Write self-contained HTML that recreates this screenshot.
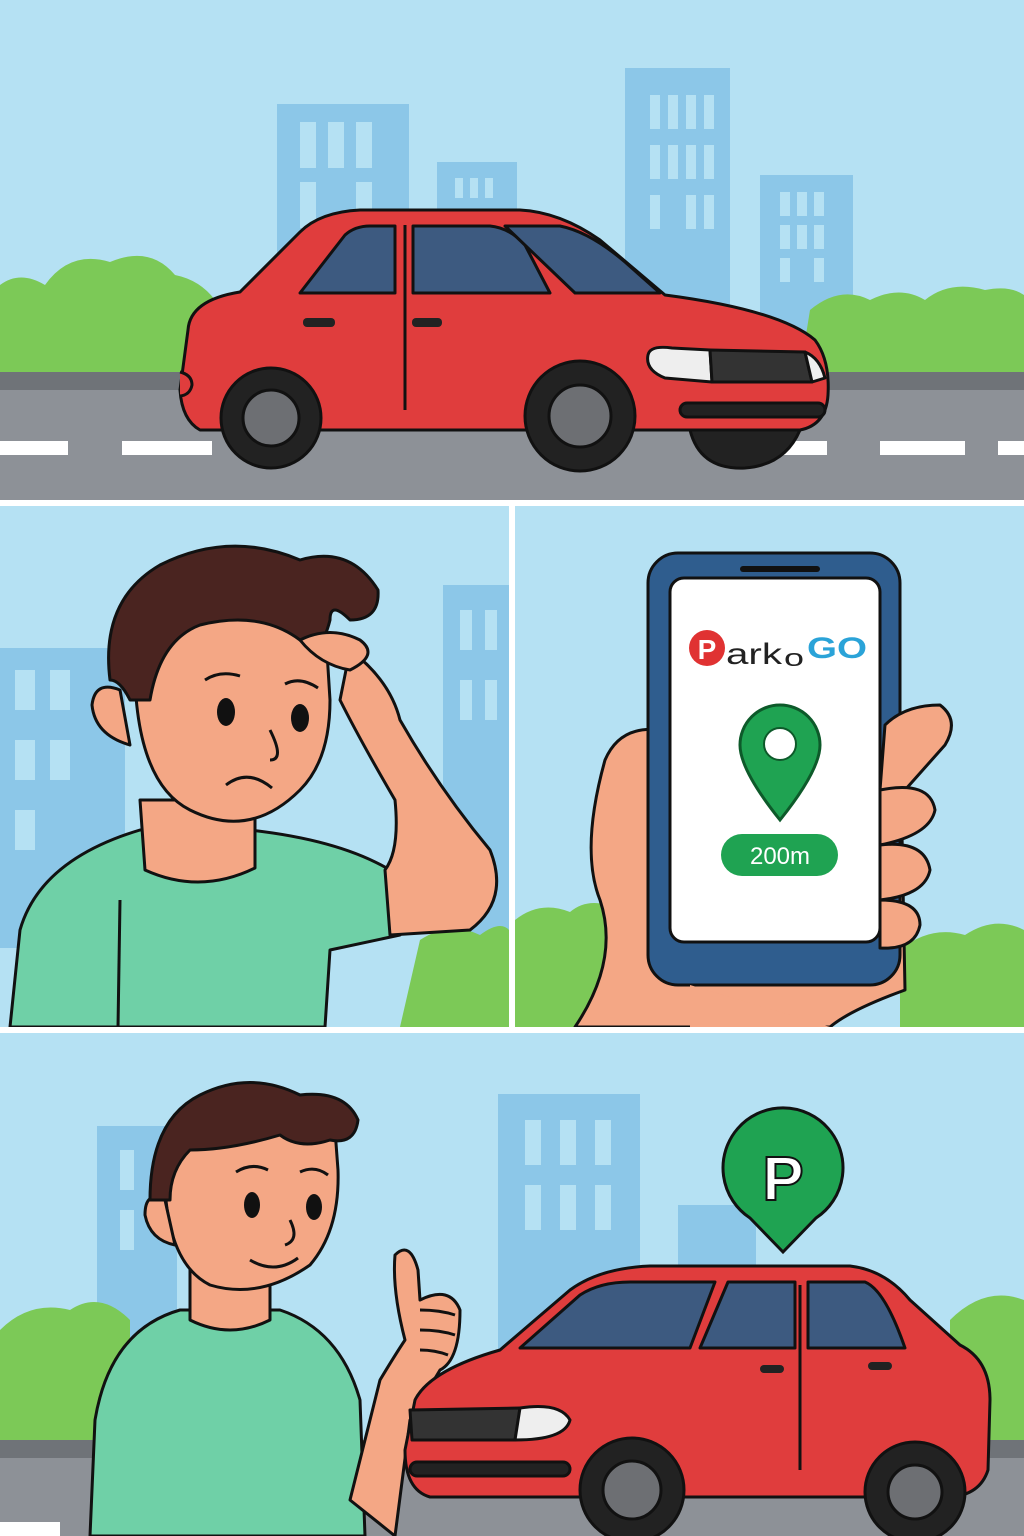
<!DOCTYPE html>
<html><head><meta charset="utf-8"><style>
html,body{margin:0;padding:0;background:#fff;}
svg{display:block}
</style></head><body>
<svg width="1024" height="1536" viewBox="0 0 1024 1536" xmlns="http://www.w3.org/2000/svg" font-family="Liberation Sans, sans-serif">
<rect width="1024" height="1536" fill="#fff"/>
<!-- PANEL 1 -->
<g>
<rect x="0" y="0" width="1024" height="500" fill="#b5e1f3"/>
<g fill="#8cc7e8">
<rect x="277" y="104" width="132" height="270"/>
<rect x="437" y="162" width="80" height="210"/>
<rect x="625" y="68" width="105" height="305"/>
<rect x="760" y="175" width="93" height="200"/>
</g>
<g fill="#b5e1f3">
<rect x="300" y="122" width="16" height="46"/><rect x="328" y="122" width="16" height="46"/><rect x="356" y="122" width="16" height="46"/>
<rect x="300" y="182" width="16" height="46"/><rect x="356" y="182" width="16" height="46"/>
<rect x="455" y="178" width="8" height="20"/><rect x="470" y="178" width="8" height="20"/><rect x="485" y="178" width="8" height="20"/>
<rect x="650" y="95" width="10" height="34"/><rect x="668" y="95" width="10" height="34"/><rect x="686" y="95" width="10" height="34"/><rect x="704" y="95" width="10" height="34"/>
<rect x="650" y="145" width="10" height="34"/><rect x="668" y="145" width="10" height="34"/><rect x="686" y="145" width="10" height="34"/><rect x="704" y="145" width="10" height="34"/>
<rect x="650" y="195" width="10" height="34"/><rect x="686" y="195" width="10" height="34"/><rect x="704" y="195" width="10" height="34"/>
<rect x="780" y="192" width="10" height="24"/><rect x="797" y="192" width="10" height="24"/><rect x="814" y="192" width="10" height="24"/>
<rect x="780" y="225" width="10" height="24"/><rect x="797" y="225" width="10" height="24"/><rect x="814" y="225" width="10" height="24"/>
<rect x="780" y="258" width="10" height="24"/><rect x="814" y="258" width="10" height="24"/>
</g>
<path d="M0 285 Q20 270 45 285 Q70 250 110 262 Q150 245 175 275 Q200 280 215 300 L230 372 L0 372Z" fill="#7cc957"/>
<path d="M800 372 L810 310 Q840 285 870 300 Q900 285 925 300 Q950 280 985 290 Q1010 285 1024 295 L1024 372Z" fill="#7cc957"/>
<rect x="0" y="372" width="1024" height="18" fill="#6f7378"/>
<rect x="0" y="390" width="1024" height="110" fill="#8d9197"/>
<g fill="#fff">
<rect x="0" y="441" width="68" height="14"/><rect x="122" y="441" width="90" height="14"/><rect x="732" y="441" width="95" height="14"/><rect x="880" y="441" width="85" height="14"/><rect x="998" y="441" width="26" height="14"/>
</g>
<g stroke="#111" stroke-width="3" stroke-linejoin="round">
<path d="M188 330 Q190 300 240 292 L300 232 Q320 212 360 210 L520 210 Q560 212 600 240 L665 295 Q780 310 815 340 Q830 360 828 395 Q826 425 800 430 L200 430 Q182 420 180 390Z" fill="#e03d3d"/>
<path d="M300 293 L345 235 Q355 226 370 226 L395 226 L395 293Z" fill="#3d5a80"/>
<path d="M413 293 L413 226 L490 226 Q510 228 525 245 L550 293Z" fill="#3d5a80"/>
<path d="M505 226 L560 226 Q590 232 625 262 L660 293 L575 293Z" fill="#3d5a80"/>
<path d="M648 355 Q650 345 672 348 L710 350 L712 382 L665 378 Q645 370 648 355Z" fill="#eee"/>
<path d="M710 350 L805 352 L812 382 L712 382Z" fill="#333"/>
<path d="M805 352 Q820 358 825 378 L812 382Z" fill="#eee"/>
<rect x="680" y="403" width="145" height="14" rx="7" fill="#222"/>
<line x1="405" y1="225" x2="405" y2="410" fill="none"/>
<path d="M180 372 Q192 375 192 385 Q190 395 180 396" fill="#e03d3d"/>
</g>
<rect x="303" y="318" width="32" height="9" rx="4" fill="#222"/><rect x="412" y="318" width="30" height="9" rx="4" fill="#222"/>
<g stroke="#111" stroke-width="3"><circle cx="271" cy="418" r="50" fill="#222"/><circle cx="271" cy="418" r="28" fill="#6d6f73"/>
<circle cx="580" cy="416" r="55" fill="#222"/><circle cx="580" cy="416" r="31" fill="#6d6f73"/>
<path d="M690 430 Q700 470 745 468 Q785 465 800 430Z" fill="#222"/></g>
</g>
<!-- PANEL 2 -->
<g>
<clipPath id="c2"><rect x="0" y="506" width="509" height="521"/></clipPath>
<g clip-path="url(#c2)">
<rect x="0" y="506" width="509" height="521" fill="#b5e1f3"/>
<rect x="0" y="648" width="125" height="300" fill="#8cc7e8"/>
<rect x="443" y="585" width="66" height="380" fill="#8cc7e8"/>
<g fill="#b5e1f3"><rect x="15" y="670" width="20" height="40"/><rect x="50" y="670" width="20" height="40"/><rect x="15" y="740" width="20" height="40"/><rect x="50" y="740" width="20" height="40"/><rect x="15" y="810" width="20" height="40"/><rect x="460" y="610" width="12" height="40"/><rect x="485" y="610" width="12" height="40"/><rect x="460" y="680" width="12" height="40"/><rect x="485" y="680" width="12" height="40"/></g>
<path d="M420 940 Q450 920 480 935 Q500 920 509 930 L509 1027 L400 1027Z" fill="#7cc957"/>
<g stroke="#111" stroke-width="3" stroke-linejoin="round">
<path d="M10 1027 L20 930 Q40 860 140 830 L250 830 Q340 840 390 870 L400 935 L330 950 L325 1027Z" fill="#6fd0a7"/>
<path d="M140 800 L145 870 Q200 895 255 868 L255 800Z" fill="#f4a785"/>
<path d="M135 640 Q130 780 190 810 Q250 840 300 790 Q330 760 330 700 L325 620 Q230 590 135 640Z" fill="#f4a785"/>
<path d="M120 690 Q95 680 92 705 Q95 735 130 745Z" fill="#f4a785"/>
<path d="M350 650 Q390 680 400 720 Q440 790 490 850 Q510 900 470 930 L390 935 L385 870 Q400 850 395 800 Q360 740 340 700Z" fill="#f4a785"/>
<path d="M110 680 Q100 600 160 565 Q230 530 300 560 Q350 545 378 590 Q380 620 350 620 Q330 600 330 620 Q320 660 300 640 Q260 610 200 625 Q160 640 150 700 L130 700 Q120 680 110 680Z" fill="#4a2420"/>
<path d="M300 640 Q330 625 360 640 Q380 655 350 670 Q320 665 300 640Z" fill="#f4a785"/>
</g>
<g fill="#111"><ellipse cx="226" cy="712" rx="9" ry="14"/><ellipse cx="300" cy="718" rx="9" ry="14"/></g>
<g stroke="#111" stroke-width="3" fill="none"><path d="M205 680 Q220 670 240 676"/><path d="M285 684 Q300 676 318 688"/><path d="M226 785 Q248 768 272 788"/><path d="M270 730 Q285 760 270 760"/><path d="M120 900 L118 1027"/></g>
</g>
</g>
<!-- PANEL 3 -->
<g>
<clipPath id="c3"><rect x="515" y="506" width="509" height="521"/></clipPath>
<g clip-path="url(#c3)">
<rect x="515" y="506" width="509" height="521" fill="#b5e1f3"/>
<path d="M515 920 Q540 900 570 912 Q590 895 620 910 L630 1027 L515 1027Z" fill="#7cc957"/>
<path d="M900 950 Q930 925 965 935 Q995 915 1024 930 L1024 1027 L900 1027Z" fill="#7cc957"/>
<g stroke="#111" stroke-width="3" stroke-linejoin="round">
<path d="M575 1027 Q620 960 600 900 Q580 850 605 760 Q620 725 660 730 L900 730 L905 990 Q850 1010 830 1027Z" fill="#f4a785"/>
<rect x="648" y="553" width="252" height="432" rx="30" fill="#2f5d8e"/>
<rect x="670" y="578" width="210" height="364" rx="14" fill="#fff"/>
<path d="M885 725 Q905 705 940 705 Q960 720 945 745 L905 790 L880 790Z" fill="#f4a785"/>
<path d="M880 790 Q930 780 935 810 Q930 835 880 845Z" fill="#f4a785"/>
<path d="M880 845 Q925 840 930 870 Q925 895 880 900Z" fill="#f4a785"/>
<path d="M880 900 Q920 900 920 925 Q915 950 880 948Z" fill="#f4a785"/>
<path d="M690 985 L830 1027 L690 1027Z" fill="#f4a785" stroke="none"/>
</g>
<rect x="740" y="566" width="80" height="6" rx="3" fill="#111"/>
<circle cx="707" cy="648" r="18" fill="#e03232"/>
<text x="707" y="659" font-size="28" font-weight="bold" fill="#fff" text-anchor="middle">P</text>
<text x="726" y="664" font-size="30" fill="#222" textLength="56" lengthAdjust="spacingAndGlyphs">ark</text>
<text x="784" y="666" font-size="24" fill="#222" textLength="20" lengthAdjust="spacingAndGlyphs">o</text>
<text x="807" y="658" font-size="30" font-weight="bold" fill="#2aa3d8" textLength="60" lengthAdjust="spacingAndGlyphs">GO</text>
<path d="M780 820 Q740 770 740 745 A40 40 0 0 1 820 745 Q820 770 780 820Z" fill="#1fa352" stroke="#0d5a2a" stroke-width="3"/>
<circle cx="780" cy="744" r="16" fill="#fff" stroke="#0d5a2a" stroke-width="2"/>
<rect x="721" y="834" width="117" height="42" rx="21" fill="#1fa352"/>
<text x="780" y="864" font-size="24" fill="#fff" text-anchor="middle">200m</text>
</g>
</g>
<!-- PANEL 4 -->
<g>
<clipPath id="c4"><rect x="0" y="1033" width="1024" height="503"/></clipPath>
<g clip-path="url(#c4)">
<rect x="0" y="1033" width="1024" height="503" fill="#b5e1f3"/>
<rect x="97" y="1126" width="80" height="310" fill="#8cc7e8"/>
<rect x="498" y="1094" width="142" height="260" fill="#8cc7e8"/>
<rect x="678" y="1205" width="78" height="80" fill="#8cc7e8"/>
<g fill="#b5e1f3"><rect x="525" y="1120" width="16" height="45"/><rect x="560" y="1120" width="16" height="45"/><rect x="595" y="1120" width="16" height="45"/><rect x="525" y="1185" width="16" height="45"/><rect x="560" y="1185" width="16" height="45"/><rect x="595" y="1185" width="16" height="45"/><rect x="120" y="1150" width="14" height="40"/><rect x="120" y="1210" width="14" height="40"/></g>
<path d="M0 1330 Q30 1300 70 1310 Q100 1290 130 1320 L130 1450 L0 1450Z" fill="#7cc957"/>
<path d="M950 1320 Q985 1285 1024 1300 L1024 1450 L950 1450Z" fill="#7cc957"/>
<rect x="0" y="1440" width="1024" height="18" fill="#6f7378"/>
<rect x="0" y="1458" width="1024" height="78" fill="#8d9197"/>
<g fill="#fff"><rect x="0" y="1522" width="60" height="14"/></g>
<g stroke="#111" stroke-width="3" stroke-linejoin="round">
<path d="M90 1536 L95 1420 Q110 1330 180 1310 L280 1310 Q340 1330 360 1400 L365 1536Z" fill="#6fd0a7"/>
<path d="M190 1270 L190 1320 Q230 1340 270 1320 L270 1270Z" fill="#f4a785"/>
<path d="M165 1150 Q160 1260 210 1285 Q260 1300 310 1265 Q340 1230 338 1170 L335 1130 Q250 1110 165 1150Z" fill="#f4a785"/>
<path d="M165 1200 Q145 1190 145 1215 Q150 1240 175 1245Z" fill="#f4a785"/>
<path d="M150 1200 Q150 1120 200 1095 Q250 1070 300 1095 Q345 1090 358 1120 Q355 1145 330 1140 Q300 1150 280 1135 Q230 1150 190 1150 Q170 1170 170 1200Z" fill="#4a2420"/>
<path d="M350 1500 L380 1380 Q395 1355 405 1340 Q392 1290 395 1255 Q410 1240 418 1270 L420 1300 Q450 1285 460 1310 Q460 1360 440 1370 L410 1420 L395 1536Z" fill="#f4a785"/>
</g>
<g fill="#111"><ellipse cx="252" cy="1205" rx="8" ry="13"/><ellipse cx="314" cy="1207" rx="8" ry="13"/></g>
<g stroke="#111" stroke-width="3" fill="none"><path d="M236 1172 Q252 1162 268 1170"/><path d="M300 1172 Q315 1165 328 1175"/><path d="M250 1260 Q275 1275 298 1258"/><path d="M290 1220 Q300 1240 285 1245"/><path d="M420 1310 Q440 1310 455 1315"/><path d="M420 1330 Q440 1330 455 1335"/><path d="M420 1350 Q435 1350 448 1355"/></g>
<g stroke="#111" stroke-width="3" stroke-linejoin="round">
<path d="M415 1400 Q430 1370 500 1350 L570 1290 Q600 1268 650 1266 L850 1266 Q885 1270 910 1300 L960 1345 Q990 1360 990 1400 L988 1470 Q980 1495 950 1497 L430 1497 Q405 1490 405 1450Z" fill="#e03d3d"/>
<path d="M520 1348 L580 1295 Q600 1282 630 1282 L715 1282 L690 1348Z" fill="#3d5a80"/>
<path d="M700 1348 L728 1282 L795 1282 L795 1348Z" fill="#3d5a80"/>
<path d="M808 1348 L808 1282 L865 1282 Q885 1290 905 1348Z" fill="#3d5a80"/>
<path d="M410 1410 L520 1408 L515 1440 L412 1440Z" fill="#333"/>
<path d="M520 1408 Q560 1402 570 1420 Q565 1440 515 1440Z" fill="#eee"/>
<rect x="410" y="1462" width="160" height="14" rx="7" fill="#222"/>
<line x1="800" y1="1285" x2="800" y2="1470" fill="none"/>
</g>
<rect x="760" y="1365" width="24" height="8" rx="4" fill="#222"/><rect x="868" y="1362" width="24" height="8" rx="4" fill="#222"/>
<g stroke="#111" stroke-width="3"><circle cx="632" cy="1490" r="52" fill="#222"/><circle cx="632" cy="1490" r="29" fill="#6d6f73"/>
<circle cx="915" cy="1492" r="50" fill="#222"/><circle cx="915" cy="1492" r="27" fill="#6d6f73"/></g>
<path d="M783 1252 L750 1218 A60 60 0 1 1 816 1218Z" fill="#1fa352" stroke="#111" stroke-width="3"/>
<text x="783" y="1200" font-size="62" font-weight="bold" fill="#fff" text-anchor="middle" stroke="#111" stroke-width="2">P</text>
</g>
</g>
</svg>
</body></html>
